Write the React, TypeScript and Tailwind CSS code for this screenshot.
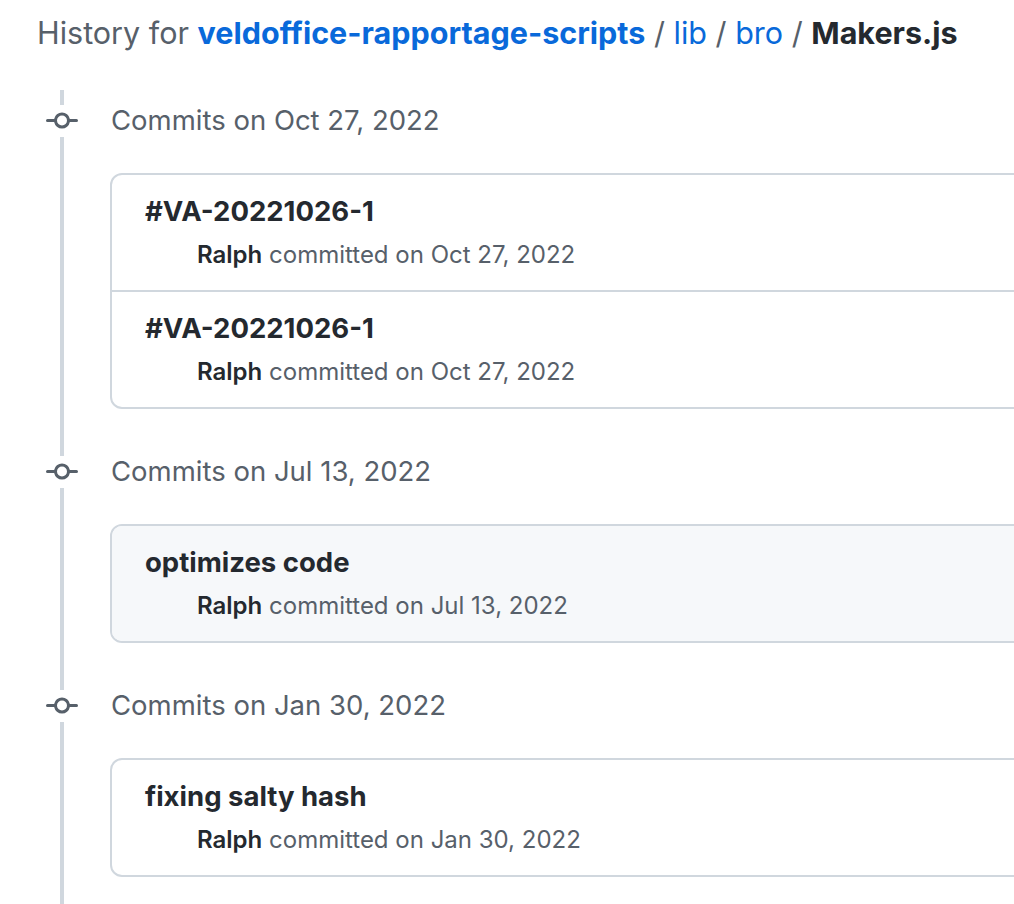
import React from "react";

type Commit = { title: string; date: string; hover?: boolean };
type Group = { date: string; commits: Commit[] };

const groups: Group[] = [
  {
    date: "Oct 27, 2022",
    commits: [
      { title: "#VA-20221026-1", date: "Oct 27, 2022" },
      { title: "#VA-20221026-1", date: "Oct 27, 2022" },
    ],
  },
  {
    date: "Jul 13, 2022",
    commits: [{ title: "optimizes code", date: "Jul 13, 2022", hover: true }],
  },
  {
    date: "Jan 30, 2022",
    commits: [{ title: "fixing salty hash", date: "Jan 30, 2022" }],
  },
];

function CommitIcon() {
  return (
    <svg viewBox="0 0 16 16" className="-ml-[18px] h-[32px] w-[32px] flex-none bg-white" fill="#57606a">
      <path d="M11.93 8.5a4.002 4.002 0 0 1-7.86 0H.75a.75.75 0 0 1 0-1.5h3.32a4.002 4.002 0 0 1 7.86 0h3.32a.75.75 0 0 1 0 1.5Zm-1.43-.75a2.5 2.5 0 1 0-5 0 2.5 2.5 0 0 0 5 0Z" />
    </svg>
  );
}

export default function App() {
  return (
    <div className="h-[904px] w-[1014px] overflow-hidden bg-white font-['Inter',sans-serif] antialiased">
      <h2 className="pl-[37px] pt-[13px] text-[30.5px] leading-[40px] text-[#57606a]">
        History for <span className="font-bold text-[#0969da]">veldoffice-rapportage-scripts</span> /{" "}
        <span className="text-[#0969da]">lib</span> / <span className="text-[#0969da]">bro</span> /{" "}
        <span className="font-bold text-[#24292f]">Makers.js</span>
      </h2>

      <div className="ml-[60px] mt-[37px] flex flex-col gap-[43px] border-l-4 border-[#d0d7de] pt-[11px] pb-[60px]">
        {groups.map((g) => (
          <div key={g.date}>
            <div className="flex h-[40px] items-center">
              <CommitIcon />
              <span className="ml-[33px] text-[27.5px] text-[#57606a]">Commits on {g.date}</span>
            </div>
            <ul className="ml-[46px] mt-[32px] w-[960px] overflow-hidden rounded-[12px] border-2 border-[#d0d7de]">
              {g.commits.map((c, i) => (
                <li
                  key={i}
                  className={`pl-[33px] pt-[20px] pb-[19px] ${i > 0 ? "border-t-2 border-[#d0d7de]" : ""} ${c.hover ? "bg-[#f6f8fa]" : ""}`}
                >
                  <div className="text-[27.5px] font-bold leading-[32px] text-[#24292f]">{c.title}</div>
                  <div className="mt-[12px] pl-[52px] text-[24px] leading-[32px] text-[#57606a]">
                    <span className="font-semibold text-[#24292f]">Ralph</span> committed on {c.date}
                  </div>
                </li>
              ))}
            </ul>
          </div>
        ))}
      </div>
    </div>
  );
}
